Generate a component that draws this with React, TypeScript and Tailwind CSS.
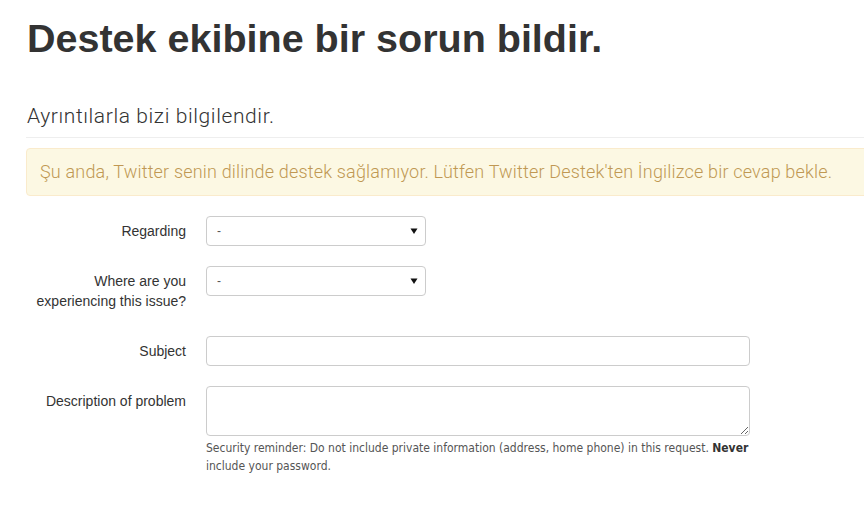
import { useState } from "react";

const SANS = "font-['Liberation_Sans',Arial,sans-serif]";
const LIGHT = "font-['Roboto','Liberation_Sans',sans-serif] font-light";
const NARROW =
  "font-['Liberation_Sans_Narrow','DejaVu_Sans_Condensed',Roboto,sans-serif]";

function Caret() {
  return (
    <svg
      className="pointer-events-none absolute right-[8px] top-[11px] h-[8px] w-[8px]"
      viewBox="0 0 8 8"
    >
      <path d="M0.5 1.5 H7.5 L4 7 Z" fill="#111" />
    </svg>
  );
}

function SelectBox({ value }: { value: string }) {
  return (
    <div className="relative h-[30px] w-[220px]">
      <select
        defaultValue={value}
        className="h-full w-full appearance-none rounded-[4px] border border-[#cccccc] bg-white pl-[10px] text-[12px] text-[#555] outline-none"
      >
        <option value="-">-</option>
      </select>
      <Caret />
    </div>
  );
}

function Row({
  label,
  children,
  className = "",
}: {
  label: React.ReactNode;
  children: React.ReactNode;
  className?: string;
}) {
  return (
    <div className={`flex ${className}`}>
      <label className="w-[160px] shrink-0 pt-[5px] text-right text-[14px] leading-[20px] text-[#333]">
        {label}
      </label>
      <div className="ml-[20px]">{children}</div>
    </div>
  );
}

export default function App() {
  const [subject, setSubject] = useState("");
  const [description, setDescription] = useState("");

  return (
    <div className={`w-full overflow-hidden bg-white ${SANS}`}>
      <div className="w-[900px] pl-[26px] pb-[40px]">
        <h1 className="pt-[14px] pl-[1px] text-[39.5px] font-bold leading-[48px] text-[#333]">
          Destek ekibine bir sorun bildir.
        </h1>

        <h2
          className={`mt-[40px] pl-[1px] text-[21px] leading-[28px] tracking-[0.6px] text-[#333] ${LIGHT}`}
        >
          Ayrıntılarla bizi bilgilendir.
        </h2>
        <div className="mt-[7px] border-t border-[#eeeeee]" />

        <div
          className={`mt-[10px] whitespace-nowrap rounded-[4px] border border-[#faebcc] bg-[#fcf8e3] px-[13px] py-[12px] text-[18px] leading-[22px] tracking-[0.18px] text-[#c09853] ${LIGHT}`}
        >
          Şu anda, Twitter senin dilinde destek sağlamıyor. Lütfen Twitter
          Destek'ten İngilizce bir cevap bekle.
        </div>

        <form className="mt-[20px]">
          <Row label="Regarding">
            <SelectBox value="-" />
          </Row>

          <Row
            className="mt-[20px] min-h-[50px]"
            label={
              <>
                Where are you
                <br />
                experiencing this issue?
              </>
            }
          >
            <SelectBox value="-" />
          </Row>

          <Row className="mt-[20px]" label="Subject">
            <input
              type="text"
              value={subject}
              onChange={(e) => setSubject(e.target.value)}
              className="h-[30px] w-[544px] rounded-[4px] border border-[#cccccc] bg-white px-[10px] text-[12px] text-[#555] outline-none"
            />
          </Row>

          <Row className="mt-[20px]" label="Description of problem">
            <textarea
              value={description}
              onChange={(e) => setDescription(e.target.value)}
              className="block h-[50px] w-[544px] rounded-[4px] border border-[#cccccc] bg-white px-[10px] py-[5px] text-[12px] text-[#555] outline-none"
            />
            <p
              className={`mt-[3px] w-[550px] text-[12px] leading-[18px] text-[#555] ${NARROW}`}
            >
              Security reminder: Do not include private information (address,
              home phone) in this request. <strong className="font-bold text-[#333]">Never</strong>{" "}
              include your password.
            </p>
          </Row>
        </form>
      </div>
    </div>
  );
}
